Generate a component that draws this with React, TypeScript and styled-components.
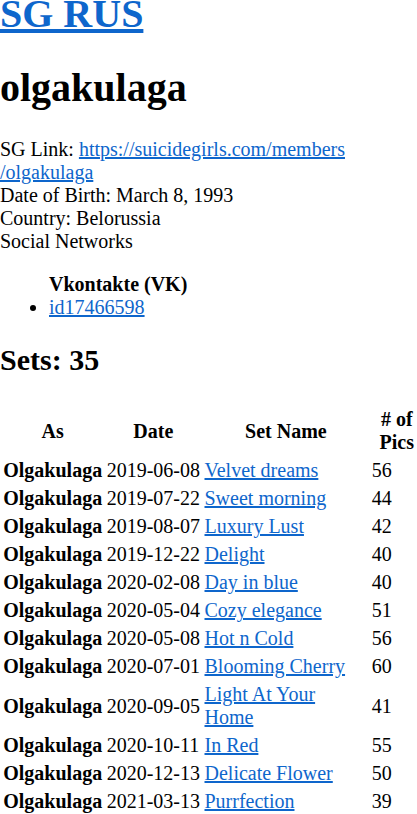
import styled, { createGlobalStyle } from 'styled-components';

const sets = [
  { date: '2019-06-08', name: 'Velvet dreams', pics: 56 },
  { date: '2019-07-22', name: 'Sweet morning', pics: 44 },
  { date: '2019-08-07', name: 'Luxury Lust', pics: 42 },
  { date: '2019-12-22', name: 'Delight', pics: 40 },
  { date: '2020-02-08', name: 'Day in blue', pics: 40 },
  { date: '2020-05-04', name: 'Cozy elegance', pics: 51 },
  { date: '2020-05-08', name: 'Hot n Cold', pics: 56 },
  { date: '2020-07-01', name: 'Blooming Cherry', pics: 60 },
  { date: '2020-09-05', name: 'Light At Your Home', pics: 41 },
  { date: '2020-10-11', name: 'In Red', pics: 55 },
  { date: '2020-12-13', name: 'Delicate Flower', pics: 50 },
  { date: '2021-03-13', name: 'Purrfection', pics: 39 },
];

const App = () => {
  return (
    <Page>
      <GlobalStyle />
      <SiteTitle>
        <Link href="#">SG RUS</Link>
      </SiteTitle>
      <ModelName>olgakulaga</ModelName>
      <Info>
        SG Link:{' '}
        <Link href="#">
          https://suicidegirls.com/members
          <wbr />
          /olgakulaga
        </Link>
        <br />
        Date of Birth: March 8, 1993
        <br />
        Country: Belorussia
        <br />
        Social Networks
      </Info>
      <Networks>
        <NetworkName>Vkontakte (VK)</NetworkName>
        <li>
          <Link href="#">id17466598</Link>
        </li>
      </Networks>
      <SetsTitle>Sets: 35</SetsTitle>
      <SetsTable>
        <thead>
          <tr>
            <HeadCell>As</HeadCell>
            <HeadCell>Date</HeadCell>
            <HeadCell $width={163}>Set Name</HeadCell>
            <HeadCell $width={50}># of Pics</HeadCell>
          </tr>
        </thead>
        <tbody>
          {sets.map((s) => (
            <tr key={s.date + s.name}>
              <AsCell>Olgakulaga</AsCell>
              <DateCell>{s.date}</DateCell>
              <td>
                <Link href="#">{s.name}</Link>
              </td>
              <td>{s.pics}</td>
            </tr>
          ))}
        </tbody>
      </SetsTable>
    </Page>
  );
};

export default App;

const GlobalStyle = createGlobalStyle`
  html, body {
    margin: 0;
    padding: 0;
    background: #ffffff;
    overflow: hidden;
  }
  body {
    font-family: "Liberation Serif", "Times New Roman", serif;
    font-size: 20px;
    color: #000000;
  }
`;

const Page = styled.div`
  width: 417px;
  display: flow-root;
  margin-top: -10px;
`;

const Link = styled.a`
  color: #0e66cc;
  text-decoration: underline;
`;

const SiteTitle = styled.h1`
  font-size: 40px;
  font-weight: bold;
  margin: 0 0 26.8px;
`;

const ModelName = styled.h1`
  font-size: 40px;
  font-weight: bold;
  margin: 26.8px 0;
`;

const Info = styled.div`
  line-height: normal;
`;

const Networks = styled.ul`
  margin: 20px 0;
  padding-left: 49px;
`;

const NetworkName = styled.div`
  font-weight: bold;
`;

const SetsTitle = styled.h2`
  font-size: 30px;
  font-weight: bold;
  margin: 24.9px 0 27.5px;
`;

const SetsTable = styled.table`
  width: 425px;
  border-spacing: 2.5px;
  font-size: 20px;

  th,
  td {
    padding: 1.5px 1.25px;
    vertical-align: middle;
  }

  td {
    text-align: left;
  }
`;

const HeadCell = styled.th<{ $width?: number }>`
  font-weight: bold;
  text-align: center;
  width: ${(p) => (p.$width ? `${p.$width}px` : 'auto')};
`;

const AsCell = styled.td`
  font-weight: bold;
  white-space: nowrap;
`;

const DateCell = styled.td`
  white-space: nowrap;
`;
